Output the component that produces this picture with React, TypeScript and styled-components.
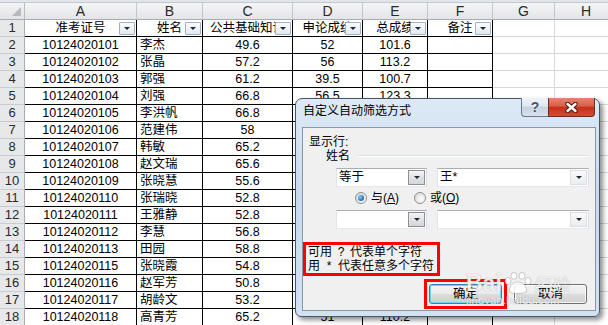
import React from "react";
import styled, { createGlobalStyle } from "styled-components";

const FONT = `"Liberation Sans", "Noto Sans CJK SC", sans-serif`;
const ROW_HEAD = 25;

const GlobalStyle = createGlobalStyle`
  html, body {
    margin: 0;
    padding: 0;
    background: #fff;
  }
  body {
    font-family: ${FONT};
    overflow: hidden;
  }
`;

interface IColumn {
  key: string;
  width: number;
  align: "left" | "center";
  boxed: boolean;
}

const columns: IColumn[] = [
  { key: "A", width: 112, align: "center", boxed: true },
  { key: "B", width: 66, align: "left", boxed: true },
  { key: "C", width: 90, align: "center", boxed: true },
  { key: "D", width: 70, align: "center", boxed: true },
  { key: "E", width: 65, align: "center", boxed: true },
  { key: "F", width: 65, align: "center", boxed: true },
  { key: "G", width: 62, align: "center", boxed: false },
  { key: "H", width: 63, align: "center", boxed: false }
];

const headers = ["准考证号", "姓名", "公共基础知识", "申论成绩", "总成绩", "备注"];

// rows 6-17 of D/E sit under the dialog
const rows: string[][] = [
  ["10124020101", "李杰", "49.6", "52", "101.6"],
  ["10124020102", "张晶", "57.2", "56", "113.2"],
  ["10124020103", "郭强", "61.2", "39.5", "100.7"],
  ["10124020104", "刘强", "66.8", "56.5", "123.3"],
  ["10124020105", "李洪帆", "66.8", "", ""],
  ["10124020106", "范建伟", "58", "", ""],
  ["10124020107", "韩敏", "65.2", "", ""],
  ["10124020108", "赵文瑞", "65.6", "", ""],
  ["10124020109", "张晓慧", "55.6", "", ""],
  ["10124020110", "张瑞晓", "52.8", "", ""],
  ["10124020111", "王雅静", "52.8", "", ""],
  ["10124020112", "李慧", "56.8", "", ""],
  ["10124020113", "田园", "58.8", "", ""],
  ["10124020115", "张晓霞", "54.8", "", ""],
  ["10124020116", "赵军芳", "50.8", "", ""],
  ["10124020117", "胡龄文", "53.2", "", ""],
  ["10124020118", "高青芳", "65.2", "51", "110.2"]
];

const SPage = styled.div`
  position: relative;
  width: 608px;
  height: 325px;
  overflow: hidden;
  background: #fff;
`;

const SSheet = styled.div`
  display: flex;
  flex-direction: column;
`;

const STopStrip = styled.div`
  height: 2px;
  background: #e2e6eb;
  border-bottom: 1px solid #c3c9d0;
`;

const SRow = styled.div`
  display: flex;
  height: 17px;
  flex: none;
`;

const SCorner = styled.div`
  position: relative;
  box-sizing: border-box;
  flex: none;
  width: ${ROW_HEAD}px;
  border-right: 1px solid #b9bdc2;
  border-bottom: 1px solid #a7acb2;
  background: linear-gradient(180deg, #f2f3f4 0%, #e1e3e6 100%);
  &::after {
    content: "";
    position: absolute;
    right: 3px;
    bottom: 3px;
    border-style: solid;
    border-width: 0 0 9px 9px;
    border-color: transparent transparent #b6bac0 transparent;
  }
`;

const SColHead = styled.div<{ $w: number }>`
  box-sizing: border-box;
  flex: none;
  width: ${({ $w }) => $w}px;
  border-right: 1px solid #c3c7cc;
  border-bottom: 1px solid #a7acb2;
  background: linear-gradient(180deg, #f4f5f6 0%, #e3e5e8 100%);
  color: #2a2a2a;
  font-size: 14px;
  line-height: 16px;
  text-align: center;
`;

const SRowHead = styled.div`
  box-sizing: border-box;
  flex: none;
  width: ${ROW_HEAD}px;
  border-right: 1px solid #a9aeb4;
  border-bottom: 1px solid #c8ccd1;
  background: #e7e8ea;
  color: #2a2a2a;
  font-size: 13px;
  line-height: 16px;
  text-align: center;
`;

const SCell = styled.div<{ $w: number; $align: string; $boxed: boolean }>`
  position: relative;
  box-sizing: border-box;
  flex: none;
  width: ${({ $w }) => $w}px;
  padding: 0 3px;
  border-right: 1px solid ${({ $boxed }) => ($boxed ? "#000" : "#d5d8dc")};
  border-bottom: 1px solid ${({ $boxed }) => ($boxed ? "#000" : "#d5d8dc")};
  text-align: ${({ $align }) => $align};
  color: #000;
  font-size: 12.5px;
  line-height: 16px;
  white-space: nowrap;
  overflow: hidden;
`;

const SFilterButton = styled.span`
  position: absolute;
  right: 1px;
  top: 2px;
  box-sizing: border-box;
  width: 16px;
  height: 13px;
  display: flex;
  align-items: center;
  justify-content: center;
  border: 1px solid #9fb0c4;
  border-radius: 1px;
  background: linear-gradient(180deg, #fbfcfd 0%, #e4e9ef 100%);
`;

const SArrow = styled.span<{ $size?: number }>`
  width: 0;
  height: 0;
  border-left: ${({ $size = 3.5 }) => $size}px solid transparent;
  border-right: ${({ $size = 3.5 }) => $size}px solid transparent;
  border-top: ${({ $size = 3.5 }) => $size}px solid #1e2a38;
`;

/* dialog */

const SDialog = styled.div`
  position: absolute;
  left: 295px;
  top: 98px;
  width: 305px;
  height: 219px;
  box-sizing: border-box;
  display: flex;
  flex-direction: column;
  border: 1px solid #46566b;
  border-radius: 7px 7px 6px 6px;
  background: linear-gradient(180deg, #dde9f6 0%, #c9daee 45%, #d3e1f2 100%);
  box-shadow: 3px 3px 5px rgba(0, 0, 0, 0.45);
  font-family: ${FONT};
  font-size: 12px;
  color: #000;
`;

const STitleBar = styled.div`
  display: flex;
  align-items: flex-start;
  height: 28px;
  flex: none;
`;

const STitle = styled.div`
  padding: 6px 0 0 7px;
  font-size: 12px;
  line-height: 12px;
`;

const SControls = styled.div`
  display: flex;
  flex: none;
  height: 19px;
  margin: -1px 4px 0 auto;
`;

const SHelpButton = styled.div`
  box-sizing: border-box;
  width: 27px;
  height: 19px;
  display: flex;
  align-items: center;
  justify-content: center;
  border: 1px solid #6a798c;
  border-top: none;
  border-right: none;
  border-radius: 0 0 0 4px;
  background: linear-gradient(180deg, #eef3f8 0%, #dfe7f0 45%, #c6d2df 52%, #d8e2ee 100%);
  color: #4a5460;
  font-weight: bold;
  font-size: 14px;
  line-height: 14px;
  text-shadow: 0 0 2px #fff;
`;

const SCloseButton = styled.div`
  box-sizing: border-box;
  width: 47px;
  height: 19px;
  display: flex;
  align-items: center;
  justify-content: center;
  border: 1px solid #6b2e24;
  border-top: none;
  border-radius: 0 0 4px 0;
  background-color: #c8331c;
  background-image: linear-gradient(
    180deg,
    rgba(255, 200, 185, 0.55) 0%,
    rgba(255, 170, 150, 0.35) 45%,
    rgba(190, 40, 20, 0.2) 52%,
    rgba(255, 140, 110, 0.25) 100%
  );
`;

const SBody = styled.div`
  flex: 1;
  display: flex;
  flex-direction: column;
  margin: 0 3px 5px 6px;
  border: 1px solid #8a97a8;
  background: #f0f0f0;
`;

const SCaption = styled.div`
  margin: 8px 0 0 6px;
  line-height: 12px;
`;

const SFieldRow = styled.div`
  display: flex;
  align-items: center;
  margin: 2px 7px 0 23px;
  line-height: 12px;
`;

const SGroove = styled.div`
  flex: 1;
  margin-left: 7px;
  border-top: 1px solid #d5dfe5;
  border-bottom: 1px solid #fff;
`;

const SComboRow = styled.div<{ $top: number }>`
  display: flex;
  gap: 10px;
  margin: ${({ $top }) => $top}px 0 0 33px;
`;

const SCombo = styled.div<{ $w: number }>`
  box-sizing: border-box;
  width: ${({ $w }) => $w}px;
  height: 19px;
  display: flex;
  border: 1px solid #abadb3;
  border-color: #abadb3 #dbdfe6 #e3e9ef #e2e3ea;
  background: #fff;
`;

const SComboText = styled.div`
  flex: 1;
  padding-left: 2px;
  font-size: 12.5px;
  line-height: 17px;
`;

const SComboButton = styled.div<{ $soft?: boolean }>`
  box-sizing: border-box;
  width: 17px;
  margin: 1px;
  display: flex;
  align-items: center;
  justify-content: center;
  border: 1px solid ${({ $soft }) => ($soft ? "#dadde2" : "#8c8f94")};
  background: ${({ $soft }) =>
    $soft
      ? "linear-gradient(180deg, #fafafa 0%, #ececec 100%)"
      : "linear-gradient(180deg, #f4f4f4 0%, #e2e2e2 50%, #d6d6d6 100%)"};
`;

const SRadioRow = styled.div`
  display: flex;
  align-items: center;
  height: 14px;
  margin: 4px 0 0 52px;
`;

const SRadioOption = styled.label`
  display: flex;
  align-items: center;
  gap: 4px;
  margin-right: 15px;
  line-height: 14px;
`;

const SRadio = styled.span<{ $checked?: boolean }>`
  box-sizing: border-box;
  width: 12px;
  height: 12px;
  border-radius: 50%;
  border: 1px solid #8e8f8f;
  display: flex;
  align-items: center;
  justify-content: center;
  background: linear-gradient(135deg, #d6d6d6 0%, #fbfbfb 100%);
  &::after {
    content: "";
    width: 6px;
    height: 6px;
    border-radius: 50%;
    background: ${({ $checked }) =>
      $checked
        ? "radial-gradient(circle at 35% 35%, #8fd0f5 0%, #2a80c2 55%, #124a7c 100%)"
        : "linear-gradient(135deg, #e6e6e6 0%, #ffffff 100%)"};
  }
`;

const SHint = styled.div`
  align-self: flex-start;
  margin-top: 13px;
  padding: 0 3px 0 2px;
  border: 3px solid #ff0000;
  line-height: 14px;
  white-space: nowrap;
`;

const SHalfWidth = styled.span`
  display: inline-block;
  width: 18px;
  text-align: center;
`;

const SButtonRow = styled.div`
  display: flex;
  justify-content: flex-end;
  align-items: center;
  gap: 7px;
  margin-top: 3px;
  padding-right: 8px;
`;

const SMark = styled.div`
  padding: 2px;
  border: 3px solid #ff0000;
  display: flex;
`;

const SButton = styled.div<{ $default?: boolean }>`
  box-sizing: border-box;
  width: 73px;
  height: 20px;
  display: flex;
  align-items: center;
  justify-content: center;
  border: 1px solid ${({ $default }) => ($default ? "#3c7fb1" : "#707070")};
  border-radius: 3px;
  background: linear-gradient(180deg, #f2f2f2 0%, #ebebeb 48%, #dddddd 52%, #cfcfcf 100%);
  box-shadow: inset 0 0 0 1px
    ${({ $default }) => ($default ? "#6fd0f6" : "rgba(255, 255, 255, 0.8)")};
  font-size: 12.5px;
  line-height: 14px;
`;

/* watermark over the screenshot */

const SWatermark = styled.div`
  position: absolute;
  left: 466px;
  top: 272px;
  display: flex;
  flex-direction: column;
  color: rgba(255, 255, 255, 0.85);
  text-shadow: 0 0 1px rgba(80, 80, 80, 0.5);
  pointer-events: none;
`;

const SWatermarkLogo = styled.div`
  display: flex;
  align-items: flex-end;
  font-family: "Liberation Sans", sans-serif;
  font-weight: bold;
  font-size: 23px;
  line-height: 22px;
`;

const SPaw = styled.span`
  width: 30px;
  height: 22px;
  margin: 0 2px 0 1px;
`;

const SWatermarkCjk = styled.span`
  font-family: "Noto Sans CJK SC", sans-serif;
  font-weight: normal;
  font-size: 18px;
  line-height: 20px;
`;

const SWatermarkUrl = styled.div`
  margin-top: 1px;
  font-family: "Liberation Sans", sans-serif;
  font-size: 11px;
  line-height: 11px;
  letter-spacing: 0.3px;
`;

const CloseGlyph = () => (
  <svg width="13" height="11" viewBox="0 0 13 11">
    <path d="M2.5 2 L10.5 9 M10.5 2 L2.5 9" stroke="#4d1a12" strokeWidth="4.4" strokeLinecap="round" />
    <path d="M2.5 2 L10.5 9 M10.5 2 L2.5 9" stroke="#fff" strokeWidth="2.4" strokeLinecap="round" />
  </svg>
);

const PawGlyph = () => (
  <svg width="30" height="22" viewBox="0 0 30 22">
    <g fill="rgba(255,255,255,0.85)" stroke="rgba(120,120,120,0.45)" strokeWidth="0.8">
      <ellipse cx="5" cy="9" rx="3" ry="3.6" />
      <ellipse cx="11" cy="3.8" rx="3" ry="3.4" />
      <ellipse cx="19" cy="3.8" rx="3" ry="3.4" />
      <ellipse cx="25" cy="9" rx="3" ry="3.6" />
      <path d="M15 10 C9 10 5 16 7 20 C9 22 21 22 23 20 C25 16 21 10 15 10 Z" />
    </g>
  </svg>
);

const Combo = ({ w, text, soft }: { w: number; text?: string; soft?: boolean }) => (
  <SCombo $w={w}>
    <SComboText>{text}</SComboText>
    <SComboButton $soft={soft}>
      <SArrow />
    </SComboButton>
  </SCombo>
);

const App = () => {
  return (
    <SPage>
      <GlobalStyle />
      <SSheet>
        <STopStrip />
        <SRow>
          <SCorner />
          {columns.map(col => (
            <SColHead key={col.key} $w={col.width}>
              {col.key}
            </SColHead>
          ))}
        </SRow>
        <SRow>
          <SRowHead>1</SRowHead>
          {columns.map((col, i) => (
            <SCell key={col.key} $w={col.width} $align="center" $boxed={col.boxed}>
              {headers[i]}
              {headers[i] && (
                <SFilterButton>
                  <SArrow $size={3} />
                </SFilterButton>
              )}
            </SCell>
          ))}
        </SRow>
        {rows.map((row, r) => (
          <SRow key={r}>
            <SRowHead>{r + 2}</SRowHead>
            {columns.map((col, i) => (
              <SCell key={col.key} $w={col.width} $align={col.align} $boxed={col.boxed}>
                {row[i] || ""}
              </SCell>
            ))}
          </SRow>
        ))}
      </SSheet>

      <SDialog>
        <STitleBar>
          <STitle>自定义自动筛选方式</STitle>
          <SControls>
            <SHelpButton>?</SHelpButton>
            <SCloseButton>
              <CloseGlyph />
            </SCloseButton>
          </SControls>
        </STitleBar>
        <SBody>
          <SCaption>显示行:</SCaption>
          <SFieldRow>
            姓名
            <SGroove />
          </SFieldRow>
          <SComboRow $top={6}>
            <Combo w={91} text="等于" />
            <Combo w={152} text="王*" soft />
          </SComboRow>
          <SRadioRow>
            <SRadioOption>
              <SRadio $checked />
              <span>
                与(<u>A</u>)
              </span>
            </SRadioOption>
            <SRadioOption>
              <SRadio />
              <span>
                或(<u>O</u>)
              </span>
            </SRadioOption>
          </SRadioRow>
          <SComboRow $top={5}>
            <Combo w={91} />
            <Combo w={152} soft />
          </SComboRow>
          <SHint>
            <div>
              可用<SHalfWidth>?</SHalfWidth>代表单个字符
            </div>
            <div>
              用<SHalfWidth>*</SHalfWidth>代表任意多个字符
            </div>
          </SHint>
          <SButtonRow>
            <SMark>
              <SButton $default>确定</SButton>
            </SMark>
            <SButton>取消</SButton>
          </SButtonRow>
        </SBody>
      </SDialog>

      <SWatermark>
        <SWatermarkLogo>
          Bai
          <SPaw>
            <PawGlyph />
          </SPaw>
          <SWatermarkCjk>经验</SWatermarkCjk>
        </SWatermarkLogo>
        <SWatermarkUrl>jingyan.baidu.com</SWatermarkUrl>
      </SWatermark>
    </SPage>
  );
};

export default App;
